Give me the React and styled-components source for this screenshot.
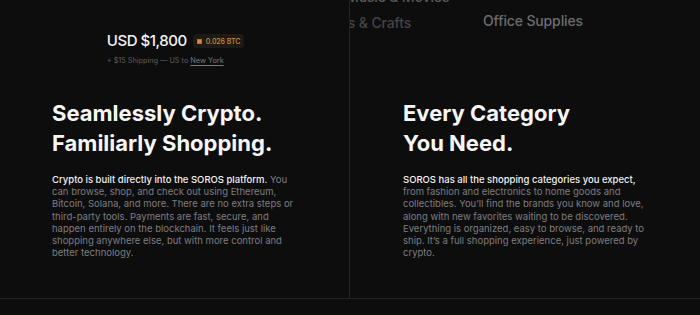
import React from "react";
import styled, { createGlobalStyle } from "styled-components";

const Global = createGlobalStyle`
  html, body { margin: 0; padding: 0; background: #0d0d0e; }
  body { font-family: Inter, "Noto Sans", "Liberation Sans", sans-serif; -webkit-font-smoothing: antialiased; }
`;

const Page = styled.div`
  width: 700px;
  height: 315px;
  background: #0d0d0e;
  overflow: hidden;
`;

const Grid = styled.div`
  display: grid;
  grid-template-columns: 350px 350px;
  height: 299px;
  border-bottom: 1px solid #232324;
  box-sizing: border-box;
`;

const Column = styled.section`
  display: flex;
  flex-direction: column;
  border-right: ${(p) => (p.$divider ? "1px solid #232324" : "none")};
  box-sizing: border-box;
  min-width: 0;
`;

const Top = styled.div`
  position: relative;
  height: 98px;
  overflow: hidden;
  display: flex;
  justify-content: center;
`;

const PriceBlock = styled.div`
  margin-top: 31px;
  margin-left: 2px;
  display: flex;
  flex-direction: column;
  gap: 5px;
`;

const PriceRow = styled.div`
  display: flex;
  align-items: center;
  gap: 6px;
`;

const Price = styled.span`
  font-size: 15px;
  line-height: 20px;
  font-weight: 500;
  color: #f4f4f4;
  letter-spacing: -0.03em;
`;

const Pill = styled.span`
  display: inline-flex;
  align-items: center;
  gap: 4px;
  height: 14px;
  padding: 0 4px;
  border-radius: 4px;
  background: #1d1a16;
  color: #d38c3c;
  font-size: 7px;
  font-weight: 500;
  letter-spacing: -0.01em;
`;

const Coin = styled.span`
  width: 5px;
  height: 5px;
  border-radius: 1px;
  background: #d98e36;
  box-shadow: inset 0 0 0 1px #b87228;
`;

const Shipping = styled.div`
  font-size: 7.3px;
  line-height: 10px;
  color: #5f5f61;
`;

const Link = styled.span`
  color: #7a7a7c;
  text-decoration: underline;
  text-underline-offset: 1.5px;
`;

const Tag = styled.span`
  position: absolute;
  white-space: nowrap;
  font-size: 14px;
  line-height: 18px;
  font-weight: 500;
  letter-spacing: -0.01em;
  color: ${(p) => p.$color};
`;

const Content = styled.div`
  padding-left: ${(p) => p.$pad}px;
  padding-right: 40px;
`;

const Heading = styled.h2`
  margin: 0;
  font-size: 22px;
  line-height: 30px;
  font-weight: 700;
  color: #f6f6f6;
  letter-spacing: 0;
`;

const Body = styled.p`
  margin: 16px 0 0;
  font-size: 9.5px;
  line-height: 12.2px;
  color: #7d7d80;
  max-width: 250px;
`;

const Lead = styled.span`
  color: #f0f0f0;
  font-weight: 500;
`;

export default function App() {
  return (
    <Page>
      <Global />
      <Grid>
        <Column $divider>
          <Top>
            <PriceBlock>
              <PriceRow>
                <Price>USD $1,800</Price>
                <Pill>
                  <Coin />
                  0.026 BTC
                </Pill>
              </PriceRow>
              <Shipping>
                + $15 Shipping — US to <Link>New York</Link>
              </Shipping>
            </PriceBlock>
          </Top>
          <Content $pad={52}>
            <Heading>
              Seamlessly Crypto.
              <br />
              Familiarly Shopping.
            </Heading>
            <Body>
              <Lead>Crypto is built directly into the SOROS platform.</Lead> You can
              browse, shop, and check out using Ethereum, Bitcoin, Solana, and
              more. There are no extra steps or third-party tools. Payments are
              fast, secure, and happen entirely on the blockchain. It feels just
              like shopping anywhere else, but with more control and better
              technology.
            </Body>
          </Content>
        </Column>
        <Column>
          <Top>
            <Tag $color="#5a5a5c" style={{ left: -4, top: -12.5 }}>Music &amp; Movies</Tag>
            <Tag $color="#444446" style={{ left: -22, top: 14 }}>Arts &amp; Crafts</Tag>
            <Tag $color="#6c6c6e" style={{ left: 133, top: 12 }}>Office Supplies</Tag>
          </Top>
          <Content $pad={53}>
            <Heading>
              Every Category
              <br />
              You Need.
            </Heading>
            <Body>
              <Lead>SOROS has all the shopping categories you expect,</Lead> from
              fashion and electronics to home goods and collectibles. You’ll find
              the brands you know and love, along with new favorites waiting to
              be discovered. Everything is organized, easy to browse, and ready
              to ship. It’s a full shopping experience, just powered by crypto.
            </Body>
          </Content>
        </Column>
      </Grid>
    </Page>
  );
}
